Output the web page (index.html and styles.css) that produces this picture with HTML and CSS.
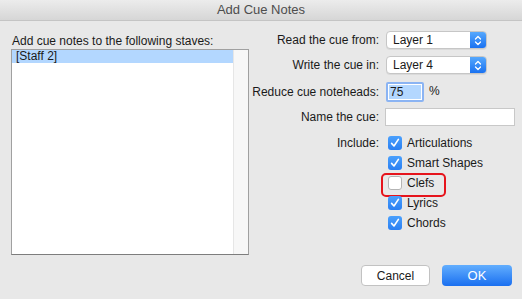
FILE: index.html
```html
<!DOCTYPE html>
<html lang="en">
<head>
  <meta charset="UTF-8">
  <title>Add Cue Notes</title>
  <link rel="stylesheet" href="styles.css">
</head>
<body>
  <div class="window">

    <!-- TITLE BAR -->
    <div class="titlebar">Add Cue Notes</div>

    <div class="main">

      <!-- STAVES LIST -->
      <div class="left">
        <div class="caption">Add cue notes to the following staves:</div>
        <div class="list">
          <div class="rows">
            <div class="row selected">[Staff 2]</div>
          </div>
          <div class="scroll"></div>
        </div>
      </div>

      <!-- OPTIONS -->
      <div class="form">
        <label class="lbl r1">Read the cue from:</label>
        <div class="popup r1">
          <span class="value">Layer 1</span>
          <span class="arrows">
            <svg width="8" height="11" viewBox="0 0 8 11"><path d="M1.5 4 L4 1.5 L6.5 4 M1.5 7 L4 9.5 L6.5 7" fill="none" stroke="#fff" stroke-width="1.3" stroke-linecap="round" stroke-linejoin="round"/></svg>
          </span>
        </div>

        <label class="lbl r2">Write the cue in:</label>
        <div class="popup r2">
          <span class="value">Layer 4</span>
          <span class="arrows">
            <svg width="8" height="11" viewBox="0 0 8 11"><path d="M1.5 4 L4 1.5 L6.5 4 M1.5 7 L4 9.5 L6.5 7" fill="none" stroke="#fff" stroke-width="1.3" stroke-linecap="round" stroke-linejoin="round"/></svg>
          </span>
        </div>

        <label class="lbl r3">Reduce cue noteheads:</label>
        <div class="pct r3">
          <div class="field focus"><span class="sel">75</span></div>
          <span class="unit">%</span>
        </div>

        <label class="lbl r4">Name the cue:</label>
        <div class="field name r4"></div>

        <label class="lbl r5">Include:</label>
        <div class="checks r5">
          <div class="check on"><span class="box"><svg width="14" height="14" viewBox="0 0 14 14"><path d="M3.6 7.4 L6 10 L10.4 3.4" fill="none" stroke="#fff" stroke-width="1.6" stroke-linecap="round" stroke-linejoin="round"/></svg></span>Articulations</div>
          <div class="check on"><span class="box"><svg width="14" height="14" viewBox="0 0 14 14"><path d="M3.6 7.4 L6 10 L10.4 3.4" fill="none" stroke="#fff" stroke-width="1.6" stroke-linecap="round" stroke-linejoin="round"/></svg></span>Smart Shapes</div>
          <div class="check marked"><span class="box"></span>Clefs</div>
          <div class="check on"><span class="box"><svg width="14" height="14" viewBox="0 0 14 14"><path d="M3.6 7.4 L6 10 L10.4 3.4" fill="none" stroke="#fff" stroke-width="1.6" stroke-linecap="round" stroke-linejoin="round"/></svg></span>Lyrics</div>
          <div class="check on"><span class="box"><svg width="14" height="14" viewBox="0 0 14 14"><path d="M3.6 7.4 L6 10 L10.4 3.4" fill="none" stroke="#fff" stroke-width="1.6" stroke-linecap="round" stroke-linejoin="round"/></svg></span>Chords</div>
        </div>
      </div>

    </div>

    <!-- BUTTONS -->
    <div class="buttons">
      <button class="btn">Cancel</button>
      <button class="btn default">OK</button>
    </div>

  </div>
</body>
</html>
```

FILE: styles.css
```css
* { margin:0; padding:0; box-sizing:border-box; }
html, body { width:522px; height:299px; overflow:hidden; background:#e8e8e8; }
body { font-family:"Liberation Sans", Arial, sans-serif; font-size:12px; color:#1a1a1a; }

.window { width:522px; height:299px; display:flex; flex-direction:column; background:#e8e8e8; }

/* TITLE BAR */
.titlebar {
  height:21px;
  background:linear-gradient(#ececec, #d6d6d6);
  border-bottom:1px solid #c4c4c4;
  text-align:center;
  font-size:13px;
  line-height:20px;
  color:#4d4d4d;
}

/* MAIN */
.main { display:flex; height:234px; padding-left:11px; }

.left { width:238px; padding-top:12px; display:flex; flex-direction:column; }
.caption { line-height:16px; padding-left:1px; }
.list {
  height:206px;
  display:flex;
  background:#fff;
  border:1px solid #a0a0a0;
  border-bottom-color:#7d7d7d;
}
.rows { flex:1; }
.row { height:13px; line-height:13px; padding-left:4px; }
.row.selected { background:#b3d7ff; }
.scroll { width:15px; background:#f7f7f7; border-left:1px solid #e6e6e6; }

/* FORM */
.form {
  display:grid;
  grid-template-columns:130px 136px;
  grid-template-rows:18px 18px 20px 18px auto;
  row-gap:7px;
  column-gap:7px;
  padding-top:10px;
}
.form .r3 { margin-top:1px; }
.lbl { text-align:right; align-self:center; white-space:nowrap; }
.lbl.r5 { align-self:start; line-height:20px; }

.popup {
  width:101px;
  display:flex;
  background:#fff;
  border:1px solid #c6c6c6;
  border-radius:4px;
  box-shadow:0 1px 0 rgba(0,0,0,0.06);
  overflow:hidden;
}
.popup .value { flex:1; padding-left:6px; line-height:16px; }
.popup .arrows {
  width:16px;
  display:flex; align-items:center; justify-content:center;
  background:linear-gradient(#56a8fd, #1a72f1);
}

.pct { display:flex; align-items:center; gap:5px; }
.field { background:#fff; border:1px solid #c8c8c8; }
.field.focus {
  width:38px; height:20px;
  border:2px solid #8bb4f3;
  padding:1px;
  border-radius:2px;
}
.field .sel { display:block; height:100%; background:#b3d7ff; line-height:14px; padding-left:1px; }
.unit { padding-bottom:1px; }
.field.name { width:130px; margin-left:-1px; }

.checks { display:flex; flex-direction:column; padding-left:2px; }
.check { height:20px; display:flex; align-items:center; gap:5px; position:relative; }
.box {
  width:14px; height:14px;
  border-radius:3px;
  background:#fff;
  border:1px solid #b4b4b4;
  display:flex;
}
.check.on .box { border:none; background:linear-gradient(#4aa0fd, #2a7ff2); }
.check.marked::after {
  content:"";
  position:absolute;
  left:-7px; top:0;
  width:61px; height:20px;
  border:2px solid #e6141c;
  border-radius:5px;
}

/* BUTTONS */
.buttons { display:flex; justify-content:flex-end; gap:12px; padding-right:10px; margin-top:10px; }
.btn {
  width:69px; height:21px;
  font-family:"Liberation Sans", Arial, sans-serif;
  font-size:12px;
  color:#1a1a1a;
  background:#fff;
  border:1px solid #c2c2c2;
  border-radius:4px;
}
.btn.default {
  width:70px;
  font-size:13px;
  color:#fff;
  border:none;
  background:linear-gradient(#62aefe, #1a6ff0);
}
```
